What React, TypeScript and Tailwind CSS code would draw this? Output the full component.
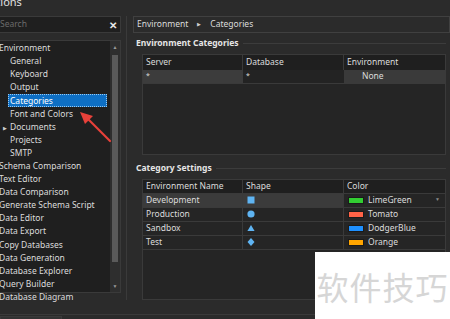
import React from "react";

const font = { fontFamily: '"Noto Sans", "Open Sans", sans-serif' };

const treeItems: { label: string; level: number; arrow?: boolean; selected?: boolean }[] = [
  { label: "Environment", level: 0 },
  { label: "General", level: 1 },
  { label: "Keyboard", level: 1 },
  { label: "Output", level: 1 },
  { label: "Categories", level: 1, selected: true },
  { label: "Font and Colors", level: 1 },
  { label: "Documents", level: 1, arrow: true },
  { label: "Projects", level: 1 },
  { label: "SMTP", level: 1 },
  { label: "Schema Comparison", level: 0 },
  { label: "Text Editor", level: 0 },
  { label: "Data Comparison", level: 0 },
  { label: "Generate Schema Script", level: 0 },
  { label: "Data Editor", level: 0 },
  { label: "Data Export", level: 0 },
  { label: "Copy Databases", level: 0 },
  { label: "Data Generation", level: 0 },
  { label: "Database Explorer", level: 0 },
  { label: "Query Builder", level: 0 },
  { label: "Database Diagram", level: 0 },
];

const categories = [
  { name: "Development", shape: "square", color: "#32cd32", colorName: "LimeGreen", active: true },
  { name: "Production", shape: "circle", color: "#ff6347", colorName: "Tomato" },
  { name: "Sandbox", shape: "triangle", color: "#1e90ff", colorName: "DodgerBlue" },
  { name: "Test", shape: "diamond", color: "#ffa500", colorName: "Orange" },
];

function Shape({ kind }: { kind: string }) {
  return (
    <svg width="8" height="8" viewBox="0 0 8 8">
      {kind === "square" && <rect x="0.5" y="0.5" width="7" height="7" fill="#5fb4f2" />}
      {kind === "circle" && <circle cx="4" cy="4" r="3.6" fill="#5fb4f2" />}
      {kind === "triangle" && <polygon points="4,1 7.6,7 0.4,7" fill="#5fb4f2" />}
      {kind === "diamond" && <polygon points="4,0 7.5,4 4,8 0.5,4" fill="#5fb4f2" />}
    </svg>
  );
}

function Section({ title }: { title: string }) {
  return (
    <div className="flex items-center gap-1 pl-[3px] pr-1">
      <span className="text-[8.5px] font-bold text-[#e6e6e6] whitespace-nowrap">{title}</span>
      <div className="h-px flex-1 bg-[#3c3c3c]" />
    </div>
  );
}

export default function App() {
  return (
    <div
      style={font}
      className="relative h-[319px] w-[450px] overflow-hidden bg-[#2b2b2b] text-[8.5px] text-[#dcdcdc]"
    >
      {/* title bar */}
      <div className="h-[16px] overflow-hidden">
        <div className="-mt-[6px] -ml-[19px] text-[11px] text-[#e0e0e0]">Options</div>
      </div>

      <div className="flex">
        {/* left column */}
        <div className="flex w-[121px] flex-col gap-[7px]">
          <div className="flex h-[17px] items-center justify-between border border-[#3a3a3a] bg-[#1f1f1f] pr-[3px] -ml-[2px]">
            <span className="pl-[1px] text-[#6b6b6b]">Search</span>
            <span className="text-[10px] font-bold leading-none text-[#e8e8e8]">✕</span>
          </div>
          <div className="flex h-[253px] border border-[#3a3a3a] bg-[#1f1f1f] -ml-[2px]">
            <div className="flex-1 pt-[1px]">
              {treeItems.map((it) => (
                <div
                  key={it.label}
                  className={`relative flex h-[13.1px] items-center whitespace-nowrap ${
                    it.level === 1 ? "pl-[11px]" : "pl-0"
                  }`}
                >
                  {it.arrow && (
                    <span className="absolute left-[4px] top-[4px] text-[5px] text-[#cfcfcf]">▶</span>
                  )}
                  <span
                    className={
                      it.selected
                        ? "w-[99px] border border-dotted border-[#9cc9ee] bg-[#0e6fc4] pl-[1px] leading-[11px] text-white -ml-[2px]"
                        : "pl-0"
                    }
                  >
                    {it.label}
                  </span>
                </div>
              ))}
            </div>
            {/* scrollbar */}
            <div className="flex w-[10px] flex-col items-center bg-[#2e2e2e]">
              <span className="mt-[2px] text-[5px] leading-[8px] text-[#9a9a9a]">▲</span>
              <div className="mt-[4px] h-[207px] w-[6px] bg-[#5a5a5a]" />
              <div className="flex-1" />
              <span className="mb-[2px] text-[5px] leading-[8px] text-[#9a9a9a]">▼</span>
            </div>
          </div>
        </div>

        {/* divider */}
        <div className="ml-[5px] w-px bg-[#3a3a3a]" />

        {/* right column */}
        <div className="ml-[6px] flex flex-1 flex-col">
          <div className="flex h-[17px] items-center gap-[9px] border border-[#404040] bg-[#2b2b2b] pl-[3px]">
            <span>Environment</span>
            <span className="text-[5px] text-[#cfcfcf]">▶</span>
            <span>Categories</span>
          </div>

          <div className="mt-[4px]">
            <Section title="Environment Categories" />
          </div>

          <div className="ml-[9px] mr-[4px] mt-[4px] h-[101px] border border-[#3a3a3a] bg-[#252525]">
            <div className="grid h-[15px] grid-cols-[100px_101px_1fr] bg-[#1f1f1f]">
              <div className="flex items-center border-r border-[#3a3a3a] pl-[3px]">Server</div>
              <div className="flex items-center border-r border-[#3a3a3a] pl-[3px]">Database</div>
              <div className="flex items-center pl-[3px]">Environment</div>
            </div>
            <div className="grid h-[14px] grid-cols-[100px_101px_1fr] border-b border-[#3a3a3a]">
              <div className="flex items-center bg-[#3c3c3c] pl-[3px] text-[7px]">*</div>
              <div className="flex items-center bg-[#232323] pl-[3px] text-[7px]">*</div>
              <div className="flex items-center bg-[#3a3a3a] pl-[18px]">None</div>
            </div>
          </div>

          <div className="mt-[7px]">
            <Section title="Category Settings" />
          </div>

          <div className="ml-[9px] mr-[4px] mt-[4px] h-[121px] border border-[#3a3a3a] bg-[#252525]">
            <div className="grid h-[14px] grid-cols-[100px_101px_1fr] border-b border-[#3a3a3a] bg-[#1f1f1f]">
              <div className="flex items-center border-r border-[#3a3a3a] pl-[3px]">Environment Name</div>
              <div className="flex items-center border-r border-[#3a3a3a] pl-[3px]">Shape</div>
              <div className="flex items-center pl-[3px]">Color</div>
            </div>
            {categories.map((c) => (
              <div
                key={c.name}
                className="grid h-[14px] grid-cols-[100px_101px_1fr] border-b border-[#3a3a3a]"
              >
                <div
                  className={`flex items-center border-r border-[#3a3a3a] pl-[3px] ${
                    c.active ? "bg-[#3b3b3b]" : ""
                  }`}
                >
                  {c.name}
                </div>
                <div
                  className={`flex items-center border-r border-[#3a3a3a] pl-[4px] ${
                    c.active ? "bg-[#3b3b3b]" : ""
                  }`}
                >
                  <Shape kind={c.shape} />
                </div>
                <div className="flex items-center gap-[4px] pl-[4px] pr-[5px]">
                  <span
                    className="h-[7px] w-[16px] border border-[#1a1a1a]"
                    style={{ backgroundColor: c.color }}
                  />
                  <span className="flex-1">{c.colorName}</span>
                  {c.active && <span className="text-[5px] text-[#8a8a8a]">▼</span>}
                </div>
              </div>
            ))}
          </div>
        </div>
      </div>

      {/* bottom bar */}
      <div className="mt-[14px] flex border-t border-[#3a3a3a]">
        <div className="mt-[1px] h-[10px] w-[62px] overflow-hidden border border-[#3a3a3a] bg-[#333333]">
          <div className="mt-[2px] pl-[2px] text-[8px] text-[#bdbdbd] whitespace-nowrap">t Copy Refresh</div>
        </div>
      </div>

      {/* red annotation arrow */}
      <svg className="absolute left-0 top-0" width="450" height="319" viewBox="0 0 450 319">
        <line x1="110" y1="141" x2="88" y2="119" stroke="#e8413a" strokeWidth="2.2" strokeLinecap="round" />
        <polygon points="80,112 93,116 85,124" fill="#e8413a" />
      </svg>

      {/* watermark */}
      <div className="absolute left-[315px] top-[252px] flex h-[67px] w-[135px] items-center justify-center bg-white">
        <span
          className="text-[32px] tracking-[1px] text-[#d6d6d6]"
          style={{ fontFamily: '"Noto Sans CJK SC", sans-serif' }}
        >
          软件技巧
        </span>
      </div>
    </div>
  );
}
